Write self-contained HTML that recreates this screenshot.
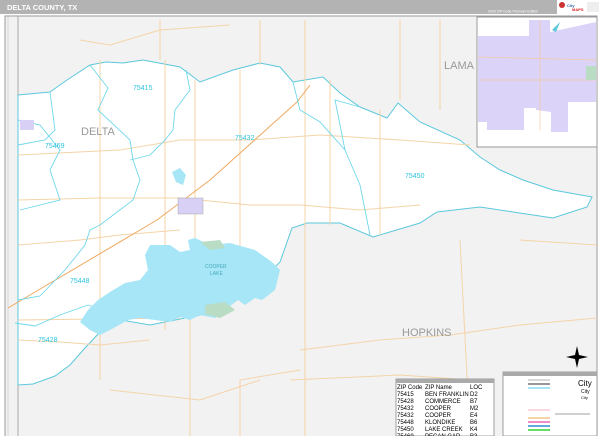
<!DOCTYPE html>
<html><head><meta charset="utf-8"><style>
body{margin:0;width:600px;height:436px;overflow:hidden;background:#fff;font-family:"Liberation Sans",sans-serif}
</style></head><body>
<svg width="600" height="436" viewBox="0 0 600 436" xmlns="http://www.w3.org/2000/svg" font-family="Liberation Sans, sans-serif">
<rect x="0" y="0" width="600" height="436" fill="#fff"/>
<rect x="0" y="0" width="600" height="14" fill="#b3b3b3"/>
<text x="7" y="10" font-size="7.5" font-weight="bold" fill="#fff">DELTA COUNTY, TX</text>
<text x="488" y="12.5" font-size="3.5" fill="#fff">2026 ZIP Code Premium Edition</text>
<rect x="557" y="0" width="43" height="15" fill="#fff"/>
<circle cx="562" cy="5" r="3" fill="#c33"/>
<text x="567" y="7" font-size="4" fill="#36a" font-weight="bold">City</text>
<text x="572" y="11" font-size="4" fill="#d22" font-weight="bold">MAPS</text>
<rect x="587" y="2" width="12" height="10" fill="#eee"/>
<rect x="5" y="16" width="592" height="422" fill="#f2f2f2" stroke="#999" stroke-width="1"/>
<line x1="18" y1="16" x2="18" y2="436" stroke="#aaa" stroke-width="1"/>
<line x1="8" y1="16" x2="8" y2="436" stroke="#bbb" stroke-width="0.5"/>
<path d="M18,95 L50,92 L67,80 L90,65 L106,62 L123,63 L143,60 L180,67 L200,82 L233,70 L260,63 L280,67 L293,82 L323,77 L340,93 L360,107 L387,118 L398,103 L420,122 L460,140 L480,157 L500,170 L523,180 L553,190 L592,197 L587,207 L553,218 L513,212 L480,207 L437,212 L420,223 L373,237 L340,223 L307,223 L292,228 L280,262 L262,280 L245,290 L200,315 L150,325 L110,318 L100,332 L85,348 L70,365 L55,376 L33,384 L18,385 Z" fill="#fff" stroke="#5bc8dc" stroke-width="1"/>
<g stroke="#f4d4a8" stroke-width="1" fill="none">
<path d="M18,155 L120,150 L180,140 L250,140 L320,135 L400,140 L470,145"/>
<path d="M18,200 L100,198 L180,198 L250,205 L300,205 L360,210 L420,205"/>
<path d="M18,245 L80,240 L120,235 L180,230"/>
<path d="M18,340 L60,342 L100,345 L150,340"/>
<path d="M18,320 L180,318"/>
<path d="M100,60 L100,380"/>
<path d="M165,60 L165,330"/>
<path d="M195,80 L195,300"/>
<path d="M240,70 L240,250"/>
<path d="M260,65 L260,20"/>
<path d="M330,80 L330,225"/>
<path d="M380,110 L380,235"/>
<path d="M160,20 L160,60"/>
<path d="M305,20 L305,380 L305,436"/>
<path d="M400,20 L400,100"/>
<path d="M440,20 L440,110"/>
<path d="M80,40 L110,45 L160,30 L230,25"/>
<path d="M300,350 L380,340 L450,335 L520,325 L597,318"/>
<path d="M290,380 L400,375 L470,380"/>
<path d="M240,436 L240,380 L300,370"/>
<path d="M460,240 L470,436"/>
<path d="M520,240 L597,245"/>
<path d="M190,320 L190,436"/>
<path d="M110,390 L200,400 L260,380"/>
</g>
<path d="M8,308 L157,220 L210,180 L297,102 L310,85" stroke="#f0a860" stroke-width="1" fill="none"/>
<g stroke="#6fd8ec" stroke-width="0.9" fill="none">
<path d="M90,65 L108,88 L98,110 L130,140 L133,160 L140,180 L133,200 L100,225 L90,230 L85,245 L65,270 L40,296 L18,300"/>
<path d="M50,92 L55,130 L45,140 L18,145"/>
<path d="M18,120 L40,125 L60,150 L50,170 L60,200 L20,210"/>
<path d="M186,70 L190,90 L175,110 L173,130 L165,140 L150,155 L130,160"/>
<path d="M293,82 L300,110 L320,122 L345,150 L335,100 L360,107"/>
<path d="M345,150 L360,185 L370,235"/>
<path d="M88,305 L115,315 L135,300 L192,298 L240,278 L262,258"/>
<path d="M15,323 L35,326 L60,315 L88,305"/>
</g>
<path d="M145,255 L150,245 L170,245 L180,252 L190,250 L188,240 L195,238 L210,245 L230,243 L255,250 L272,262 L280,270 L275,290 L262,300 L255,298 L245,305 L238,300 L225,310 L215,318 L200,315 L190,320 L180,317 L170,322 L155,320 L140,318 L128,320 L110,330 L100,335 L90,330 L80,322 L88,310 L98,300 L110,292 L125,283 L140,280 L148,270 Z" fill="#a6e6f7"/>
<path d="M200,242 L220,240 L225,248 L210,250 Z" fill="#b9dcc4"/>
<path d="M205,305 L225,302 L235,310 L220,318 L205,314 Z" fill="#b9dcc4"/>
<path d="M172,172 L180,168 L186,175 L183,185 L176,182 Z" fill="#a6e6f7"/>
<text x="205" y="268" font-size="5" fill="#4ab">COOPER</text>
<text x="210" y="275" font-size="5" fill="#4ab">LAKE</text>
<rect x="178" y="198" width="25" height="16" fill="#d9d0f5" stroke="#999" stroke-width="0.4"/>
<rect x="20" y="120" width="14" height="10" fill="#d9d0f5"/>
<g fill="#2ec4e0" font-size="7">
<text x="133" y="90">75415</text>
<text x="45" y="148">75469</text>
<text x="235" y="140">75432</text>
<text x="405" y="178">75450</text>
<text x="70" y="283">75448</text>
<text x="38" y="342">75428</text>
</g>
<text x="81" y="135" font-size="11" fill="#999">DELTA</text>
<text x="402" y="336" font-size="11" fill="#999">HOPKINS</text>
<text x="444" y="69" font-size="11" fill="#999">LAMA</text>
<rect x="477" y="17" width="120" height="130" fill="#fff" stroke="#999" stroke-width="1"/>
<path d="M478,36 L529,36 L529,20 L550,20 L550,32 L596,22 L596,102 L568,102 L568,132 L551,132 L551,112 L536,110 L536,108 L524,108 L524,130 L487,130 L487,122 L478,122 Z" fill="#dcd4f8"/>
<path d="M478,57 L596,60 M540,20 L540,130 M480,80 L596,80" stroke="#f4c9a5" stroke-width="0.7" fill="none"/>
<rect x="586" y="66" width="10" height="14" fill="#b9dcc4"/>
<path d="M552,30 L560,22 L556,32 Z" fill="#5bc8dc"/>
<g transform="translate(577,357)" fill="#000">
<path d="M0,-11 L2,-2 L11,0 L2,2 L0,11 L-2,2 L-11,0 L-2,-2 Z"/>
</g>
<rect x="396" y="379" width="98" height="57" fill="#fff" stroke="#888" stroke-width="0.8"/>
<rect x="396" y="379" width="98" height="4" fill="#aaa"/>
<g font-size="6" fill="#000">
<text x="397" y="389">ZIP Code</text><text x="425" y="389">ZIP Name</text><text x="470" y="389">LOC</text>
<text x="397" y="396">75415</text><text x="425" y="396">BEN FRANKLIN</text><text x="470" y="396">D2</text>
<text x="397" y="403">75428</text><text x="425" y="403">COMMERCE</text><text x="470" y="403">B7</text>
<text x="397" y="410">75432</text><text x="425" y="410">COOPER</text><text x="470" y="410">M2</text>
<text x="397" y="417">75432</text><text x="425" y="417">COOPER</text><text x="470" y="417">E4</text>
<text x="397" y="424">75448</text><text x="425" y="424">KLONDIKE</text><text x="470" y="424">B6</text>
<text x="397" y="431">75450</text><text x="425" y="431">LAKE CREEK</text><text x="470" y="431">K4</text>
<text x="397" y="438">75469</text><text x="425" y="438">PECAN GAP</text><text x="470" y="438">B3</text>
</g>
<rect x="503" y="372" width="94" height="64" fill="#fff" stroke="#888" stroke-width="0.8"/>
<rect x="503" y="372" width="94" height="4" fill="#aaa"/>
<g stroke-width="1.4" fill="none">
<line x1="528" y1="380" x2="550" y2="380" stroke="#ccc"/>
<line x1="528" y1="384" x2="550" y2="384" stroke="#777"/>
<line x1="528" y1="388" x2="550" y2="388" stroke="#a6e6f7" stroke-width="2"/>
<line x1="528" y1="410" x2="550" y2="410" stroke="#f9d8e0" stroke-width="2"/>
<line x1="528" y1="418" x2="550" y2="418" stroke="#f4d4a8" stroke-width="2"/>
<line x1="528" y1="422" x2="550" y2="422" stroke="#f08cc8" stroke-width="2"/>
<line x1="528" y1="426" x2="550" y2="426" stroke="#6ad" stroke-width="2"/>
<line x1="528" y1="430" x2="550" y2="430" stroke="#6d6" stroke-width="2"/>
<line x1="555" y1="414" x2="590" y2="414" stroke="#444" stroke-width="0.5"/>
</g>
<text x="578" y="386" font-size="8" fill="#000">City</text>
<text x="581" y="393" font-size="5" fill="#000">City</text>
<text x="581" y="399" font-size="4" fill="#000">City</text>
</svg>
</body></html>
